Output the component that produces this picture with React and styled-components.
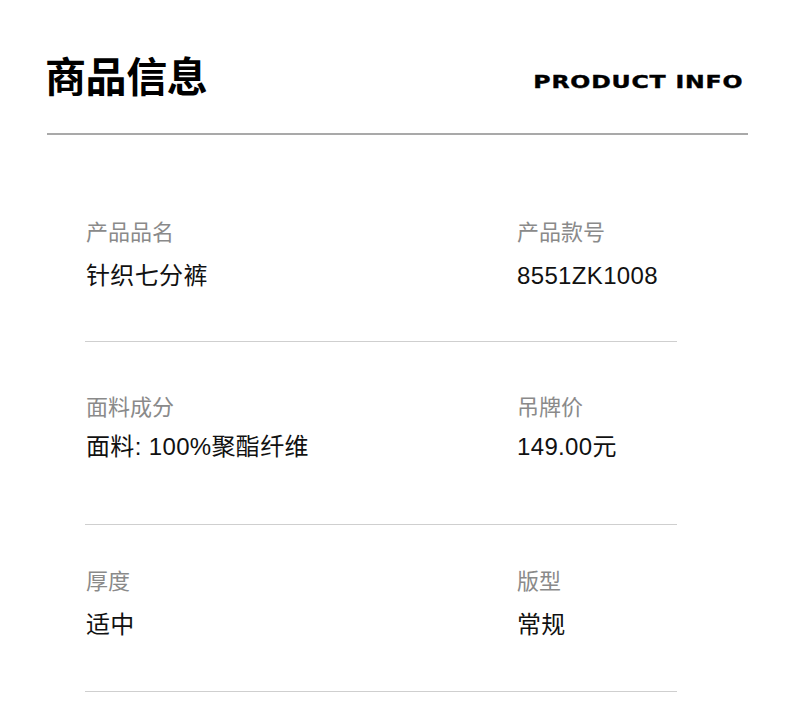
import React from 'react';
import styled, { createGlobalStyle } from 'styled-components';

const GlobalStyle = createGlobalStyle`
	html, body {
		margin: 0;
		padding: 0;
		background: #ffffff;
	}
	body {
		font-family: "Liberation Sans", "Noto Sans CJK SC", sans-serif;
		color: #111;
	}
`;

// PAGE //
const Page = styled.main`
	width: 790px;
	padding: 53px 0 0 47px;
	box-sizing: border-box;
`;
// END PAGE //

// HEADER //
const Header = styled.header`
	width: 701px;
	display: flex;
	justify-content: space-between;
	align-items: flex-start;
	padding-bottom: 38px;
	border-bottom: 2px solid #a9a9a9;
`;

const Title = styled.h1`
	margin: 1px 0 0 -2px;
	font-family: "Noto Sans CJK SC", sans-serif;
	font-size: 41px;
	line-height: 41px;
	font-weight: 700;
	color: #000;
	letter-spacing: -0.4px;
`;

const EnTitle = styled.span`
	display: inline-block;
	margin-top: 20px;
	margin-right: 5px;
	font-family: "DejaVu Sans", sans-serif;
	font-weight: 700;
	font-size: 18px;
	line-height: 18px;
	letter-spacing: 0.6px;
	color: #000;
	-webkit-text-stroke: 0.4px #000;
	transform: scaleX(1.31);
	transform-origin: right center;
	white-space: nowrap;
`;
// END HEADER //

// INFO TABLE //
const Table = styled.section`
	width: 592px;
	margin-left: 38px;
`;

const Row = styled.div`
	display: grid;
	grid-template-columns: 431px 1fr;
	padding: ${({ $top }) => $top}px 0 ${({ $bottom }) => $bottom}px;
	border-bottom: 1px solid #cfcfcf;
`;

const Field = styled.div`
	display: flex;
	flex-direction: column;
	gap: ${({ $gap }) => $gap}px;
	padding-left: 1px;
`;

const Label = styled.span`
	font-size: 22px;
	line-height: 22px;
	color: #8a8a8a;
	white-space: nowrap;
`;

const Value = styled.span`
	font-size: 24px;
	line-height: 24px;
	letter-spacing: 0.35px;
	color: #111;
	white-space: nowrap;
`;
// END INFO TABLE //

const rows = [
	{ top: 87, gap: 20, bottom: 53, items: [['产品品名', '针织七分裤'], ['产品款号', '8551ZK1008']] },
	{ top: 55, gap: 16, bottom: 65, items: [['面料成分', '面料: 100%聚酯纤维'], ['吊牌价', '149.00元']] },
	{ top: 46, gap: 20, bottom: 54, items: [['厚度', '适中'], ['版型', '常规']] },
];

export default function App() {
	return (
		<>
			<GlobalStyle />
			<Page>
				<Header>
					<Title>商品信息</Title>
					<EnTitle>PRODUCT INFO</EnTitle>
				</Header>
				<Table>
					{rows.map((row, i) => (
						<Row key={i} $top={row.top} $bottom={row.bottom}>
							{row.items.map(([label, value]) => (
								<Field key={label} $gap={row.gap}>
									<Label>{label}</Label>
									<Value>{value}</Value>
								</Field>
							))}
						</Row>
					))}
				</Table>
			</Page>
		</>
	);
}
